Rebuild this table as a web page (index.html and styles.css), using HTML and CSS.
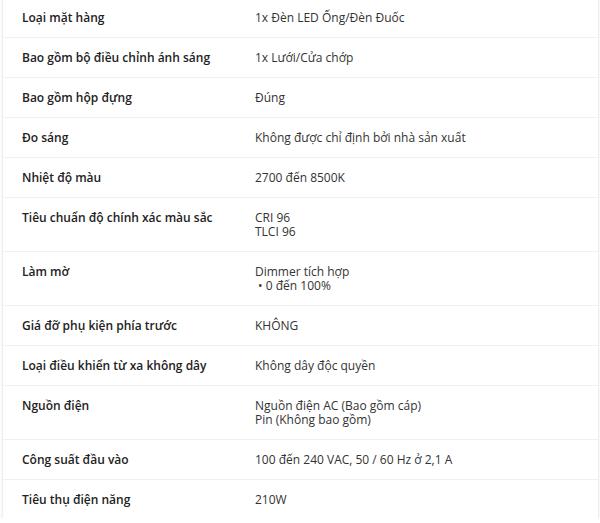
FILE: index.html
```html
<!DOCTYPE html>
<html lang="vi">
<head>
<meta charset="utf-8">
<link rel="stylesheet" href="styles.css">
</head>
<body>
<div class="specs">
  <div class="row"><div class="label">Loại mặt hàng</div><div class="value">1x Đèn LED Ống/Đèn Đuốc</div></div>
  <div class="row"><div class="label">Bao gồm bộ điều chỉnh ánh sáng</div><div class="value">1x Lưới/Cửa chớp</div></div>
  <div class="row"><div class="label">Bao gồm hộp đựng</div><div class="value">Đúng</div></div>
  <div class="row"><div class="label">Đo sáng</div><div class="value">Không được chỉ định bởi nhà sản xuất</div></div>
  <div class="row"><div class="label">Nhiệt độ màu</div><div class="value">2700 đến 8500K</div></div>
  <div class="row"><div class="label">Tiêu chuẩn độ chính xác màu sắc</div><div class="value">CRI 96<br>TLCI 96</div></div>
  <div class="row"><div class="label">Làm mờ</div><div class="value">Dimmer tích hợp<br>&nbsp;• 0 đến 100%</div></div>
  <div class="row"><div class="label">Giá đỡ phụ kiện phía trước</div><div class="value">KHÔNG</div></div>
  <div class="row"><div class="label">Loại điều khiển từ xa không dây</div><div class="value">Không dây độc quyền</div></div>
  <div class="row"><div class="label">Nguồn điện</div><div class="value">Nguồn điện AC (Bao gồm cáp)<br>Pin (Không bao gồm)</div></div>
  <div class="row"><div class="label">Công suất đầu vào</div><div class="value">100 đến 240 VAC, 50 / 60 Hz ở 2,1 A</div></div>
  <div class="row last"><div class="label">Tiêu thụ điện năng</div><div class="value">210W</div></div>
</div>
</body>
</html>
```
FILE: styles.css
```css
html, body {
  margin: 0;
  padding: 0;
  background: #fff;
}
body {
  font-family: "Open Sans", "Liberation Sans", sans-serif;
  font-size: 12px;
  line-height: 14px;
  color: #333;
}
.specs {
  margin: -2px 0 0 3px;
  width: 595px;
  background: #fff;
  box-shadow: 0 0 3px rgba(0, 0, 0, 0.18);
}
.row {
  display: grid;
  grid-template-columns: 233px 1fr;
  border-bottom: 1px solid #f0f0f0;
}
.row.last {
  border-bottom: none;
}
.label, .value {
  padding: 12.5px 19px;
}
.label {
  font-weight: 600;
  color: #222;
}
.value {
  color: #333;
}
```
